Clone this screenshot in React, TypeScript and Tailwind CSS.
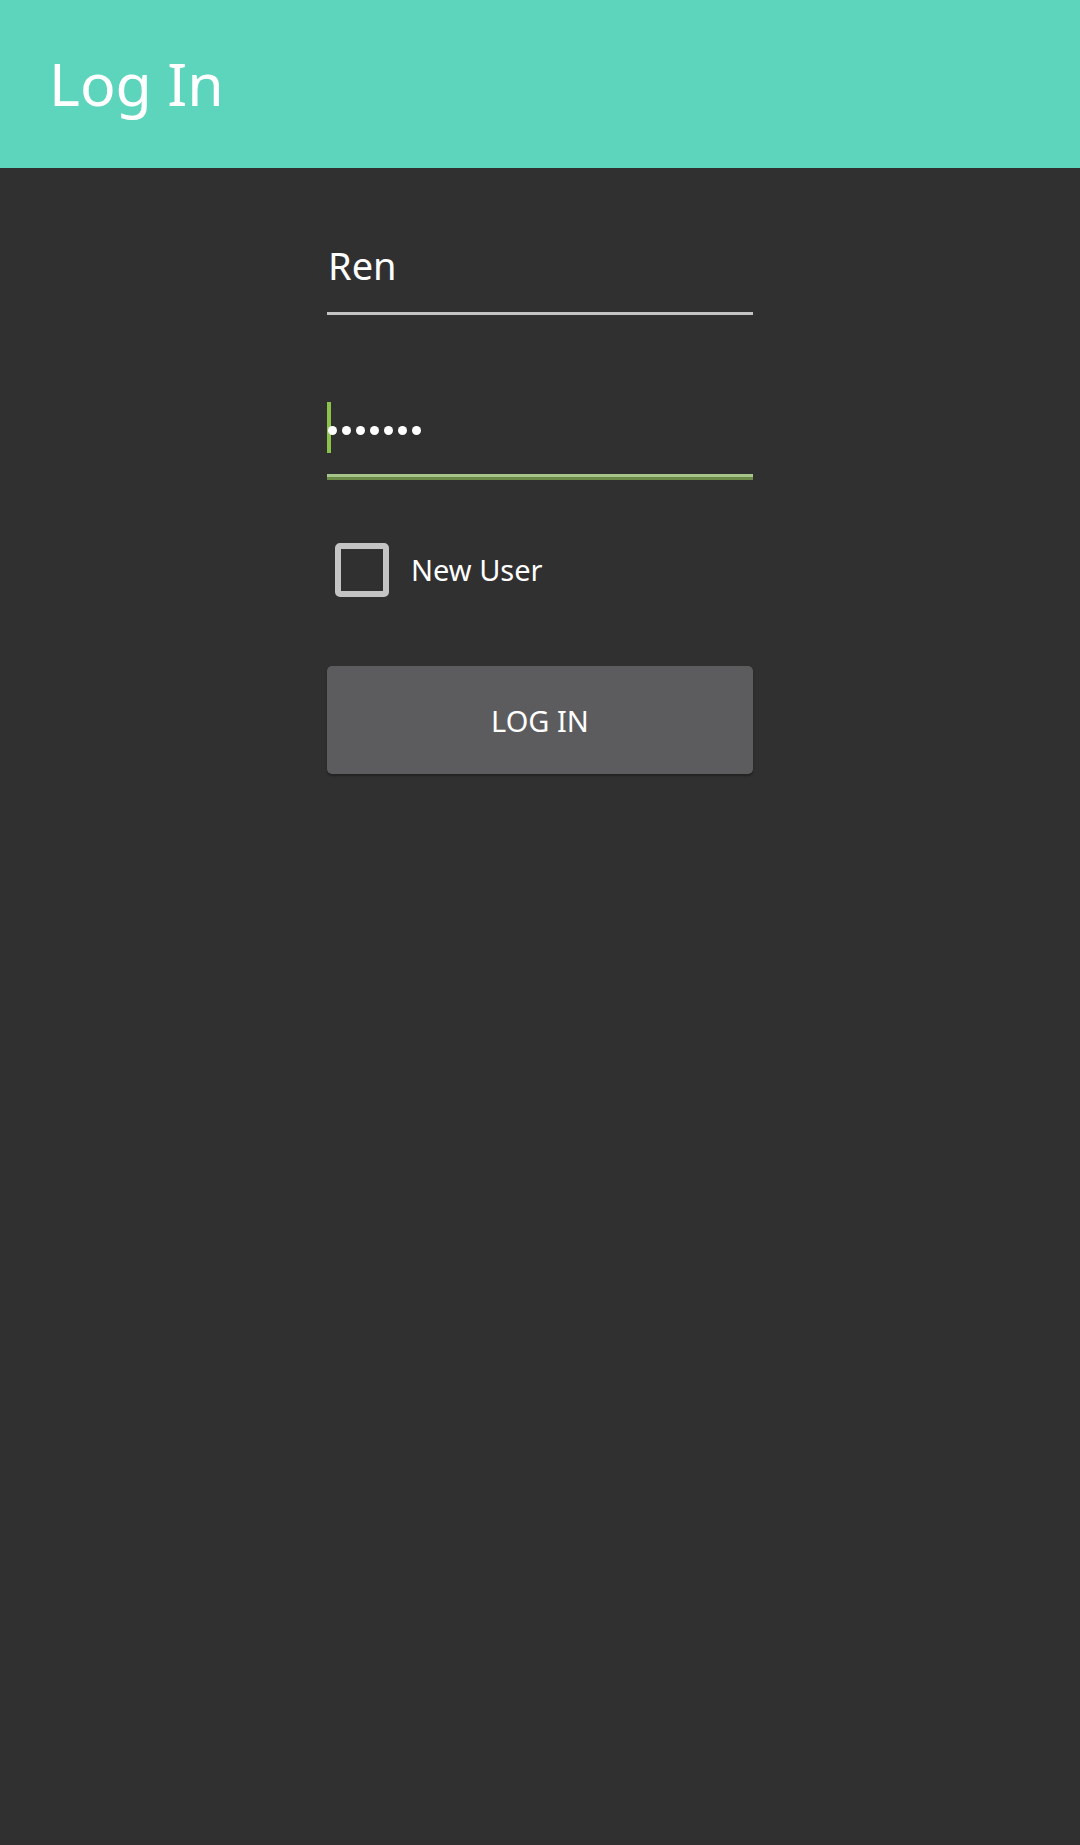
import React, { useState } from 'react';

const FONT = { fontFamily: '"Noto Sans", "Open Sans", sans-serif' };

export default function App() {
  const [username] = useState('Ren');
  const [isNewUser, setIsNewUser] = useState(false);

  return (
    <div className="min-h-[1845px] bg-[#303030] text-white" style={FONT}>
      <header className="h-[168px] bg-[#5dd4bc] flex items-center px-[49px]">
        <h1 className="text-[59px] leading-none font-normal text-white -mt-[2px]">Log In</h1>
      </header>

      <main className="flex justify-center">
        <div className="w-[426px] flex flex-col">
          {/* username */}
          <div className="pt-[66px]">
            <div className="h-[78px] flex items-center pl-px text-[38px] leading-none pb-[16px]">
              {username}
            </div>
            <div className="h-[3px] bg-[#c4c4c4]" />
          </div>

          {/* password */}
          <div className="mt-[87px]">
            <div className="h-[51px] flex items-center">
              <div className="w-[4px] h-[51px] bg-[#8bc34a]" />
              <div className="flex gap-[5px] -ml-[3px] mt-[6px]">
                {Array.from({ length: 7 }).map((_, i) => (
                  <span key={i} className="w-[9px] h-[9px] rounded-full bg-white" />
                ))}
              </div>
            </div>
            <div className="mt-[21px] h-[3px] bg-[#a6c58a]" />
            <div className="h-[3px] bg-[#6b8a48]" />
          </div>

          {/* new user */}
          <label className="mt-[63px] flex items-center gap-[22px] pl-[8px] cursor-pointer">
            <span
              onClick={() => setIsNewUser(!isNewUser)}
              className="w-[54px] h-[54px] rounded-[5px] border-[6px] border-[#c4c4c4] block"
            />
            <span className="text-[29px] leading-none pb-[2px]">New User</span>
          </label>

          {/* button */}
          <button className="mt-[69px] h-[108px] rounded-[5px] bg-[#5c5c5e] text-[29px] leading-none text-white shadow-[0_2px_2px_rgba(0,0,0,0.3)]">
            LOG IN
          </button>
        </div>
      </main>
    </div>
  );
}
